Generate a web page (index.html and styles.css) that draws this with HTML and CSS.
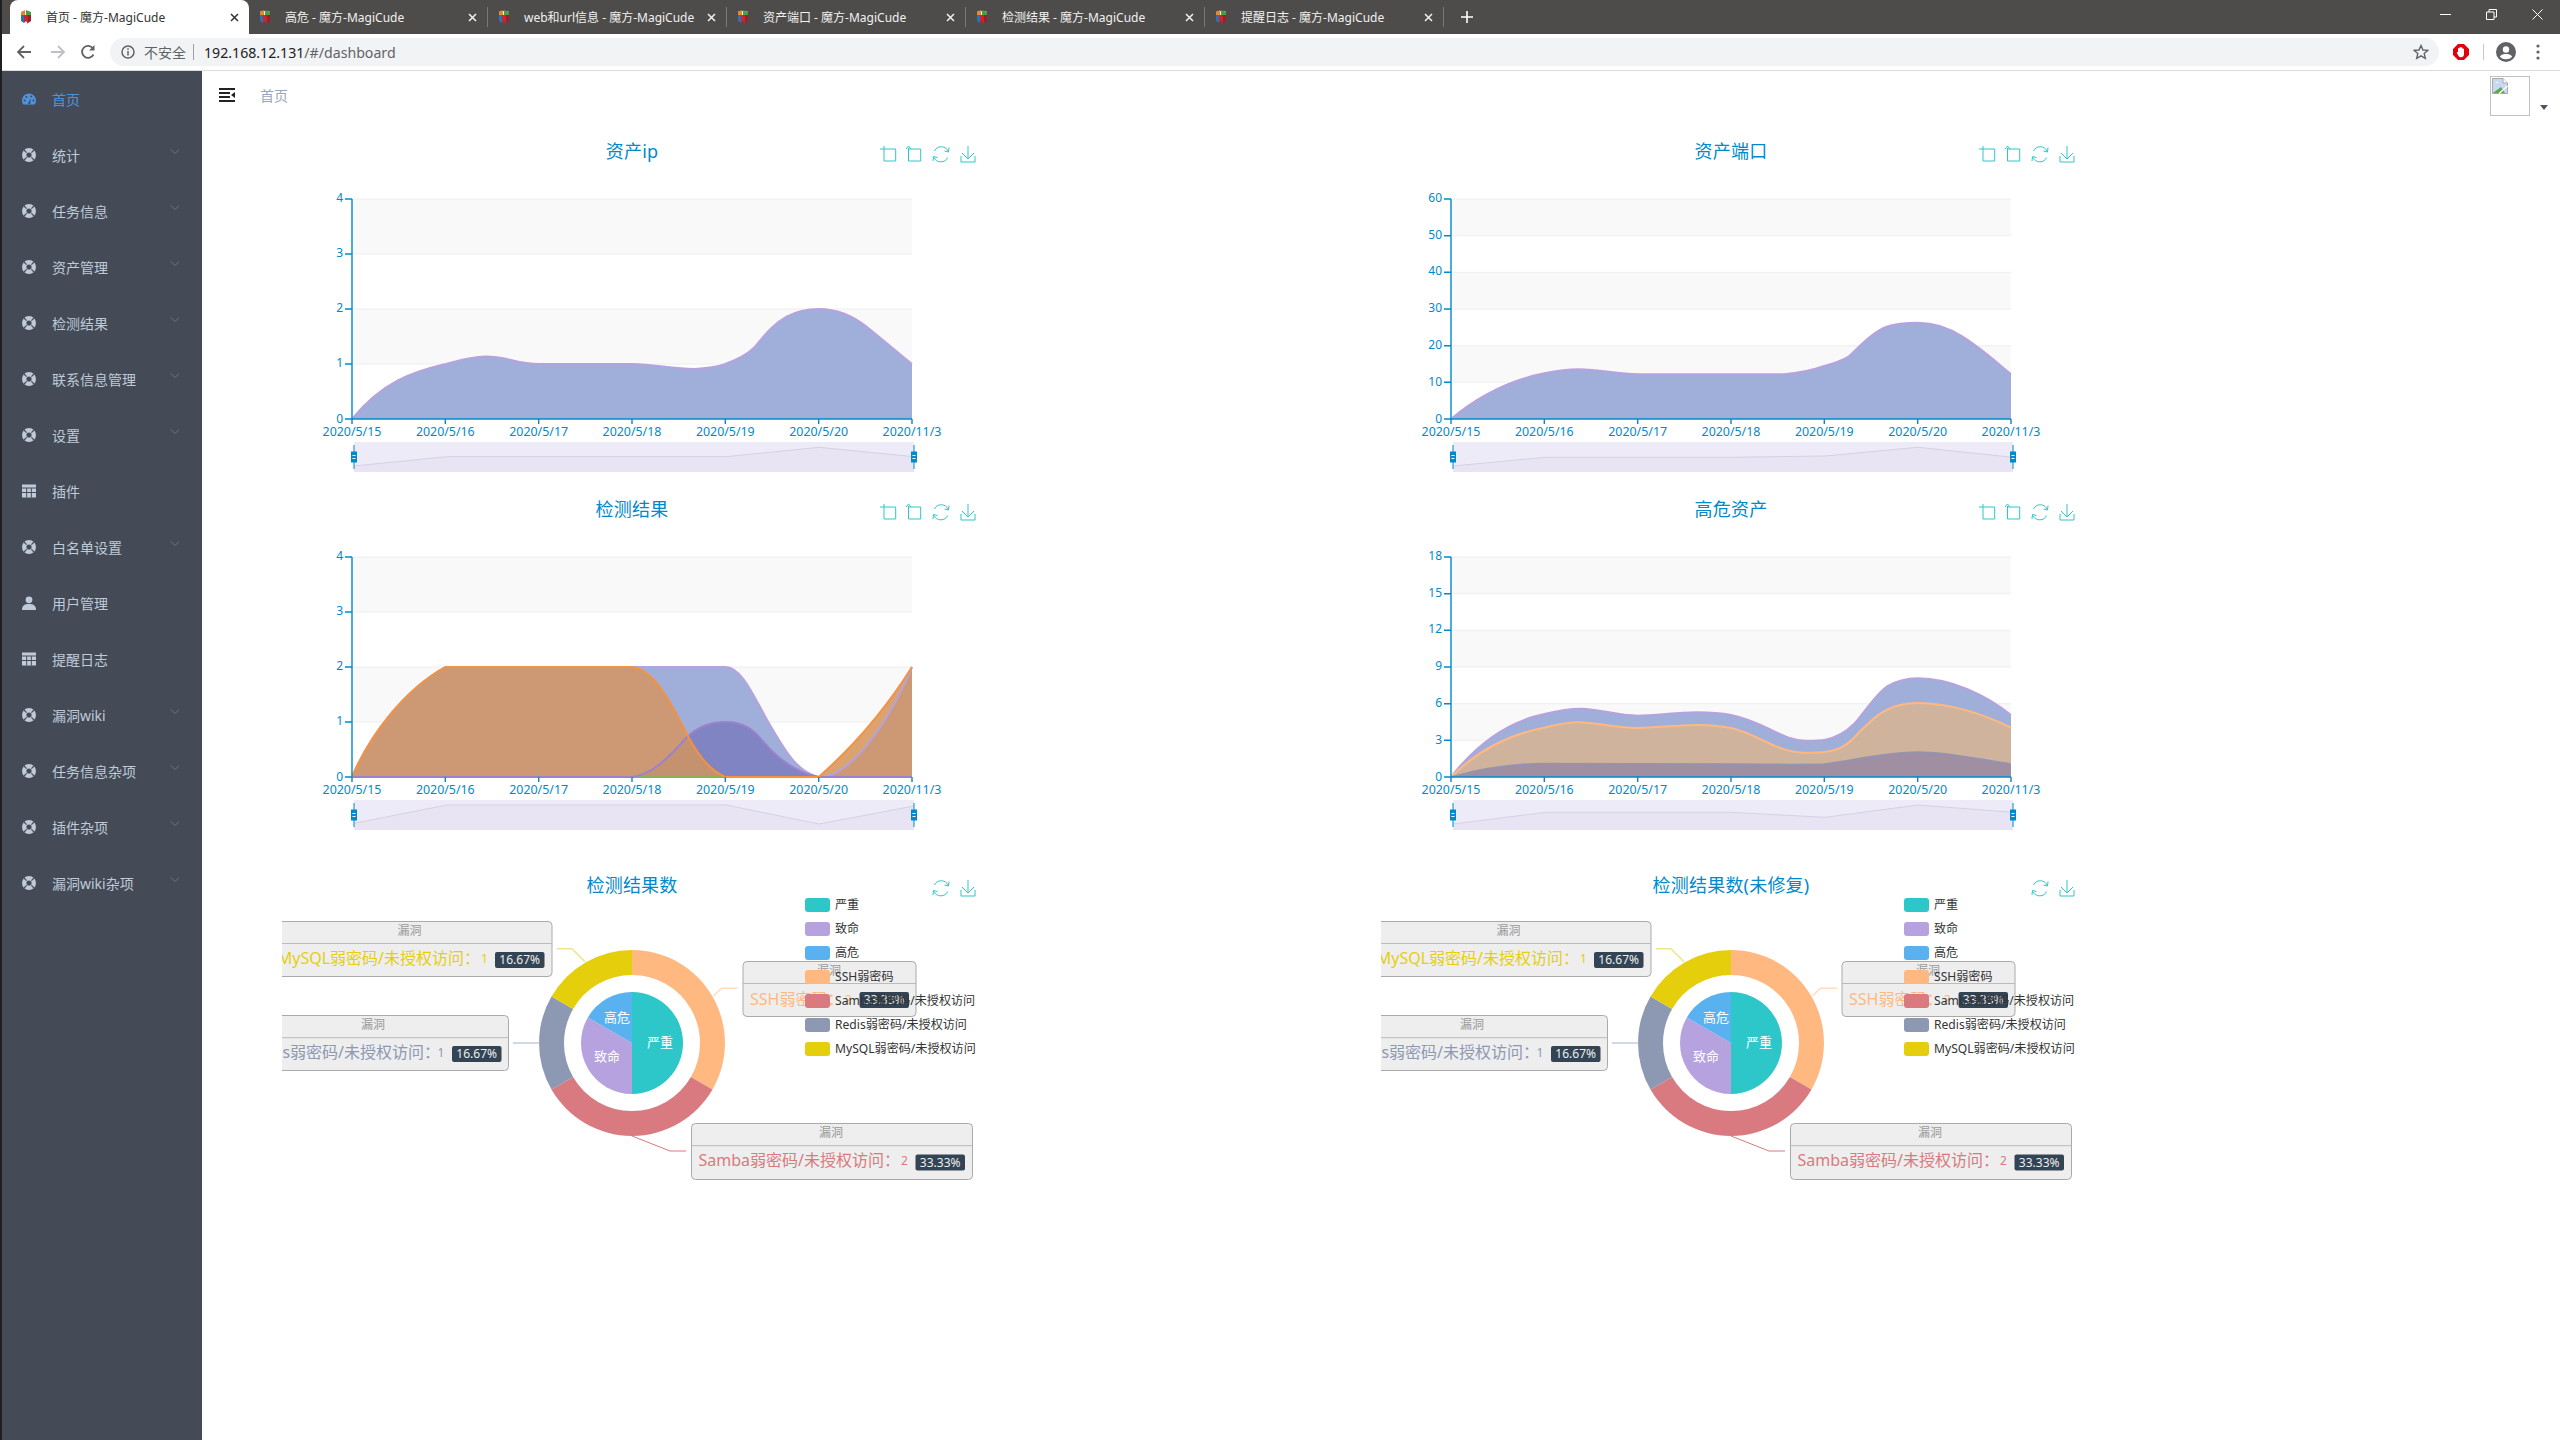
FILE: index.html
```html
<!DOCTYPE html>
<html lang="zh-CN">
<head>
<meta charset="utf-8">
<title>首页 - 魔方-MagiCude</title>
<link rel="stylesheet" href="styles.css">
</head>
<body>
<svg class="defs" width="0" height="0">
  <defs>
    <symbol id="fav" viewBox="0 0 10 14">
      <rect x="0" y="1" width="10" height="10" rx="2" fill="#eee"/>
      <path d="M0 2 L4 0 V5 L0 5 Z" fill="#e08a2c"/>
      <path d="M5 0 L10 2 V5 H5 Z" fill="#4c9a4a"/>
      <path d="M0 5 H3 V13 L0 11 Z" fill="#2f6fb5"/>
      <path d="M3 5 H7 V14 L5 11 L3 13 Z" fill="#c8262b"/>
      <path d="M7 5 H10 V11 L7 13 Z" fill="#9a1f2a"/>
    </symbol>
    <symbol id="x" viewBox="0 0 9 9"><path d="M1 1 L8 8 M8 1 L1 8" fill="none" stroke="currentColor" stroke-width="1.5"/></symbol>
    <symbol id="buoy" viewBox="0 0 14 14">
      <circle cx="7" cy="7" r="4.8" fill="none" stroke="#bfcbd9" stroke-width="4.4"/>
      <path d="M2 2 L4.6 4.6 M12 2 L9.4 4.6 M2 12 L4.6 9.4 M12 12 L9.4 9.4" stroke="#444a56" stroke-width="1.1"/>
    </symbol>
    <symbol id="table" viewBox="0 0 14 13">
      <rect width="14" height="13" fill="#bfcbd9"/>
      <path d="M0 3.5 H14 M0 8 H14 M4.7 3.5 V13 M9.3 3.5 V13" stroke="#444a56" stroke-width="1"/>
    </symbol>
    <symbol id="user" viewBox="0 0 14 14">
      <circle cx="7" cy="3.8" r="3.4" fill="#bfcbd9"/>
      <path d="M0 14 C0 9 3 8 7 8 C11 8 14 9 14 14 Z" fill="#bfcbd9"/>
    </symbol>
    <symbol id="chev" viewBox="0 0 10 6"><path d="M1 .5 L5 4.5 L9 .5" fill="none" stroke="#6f7682" stroke-width="1"/></symbol>
    <g id="t-zoom"><path d="M602 14 V29 H613.7 V17 H598" fill="none" stroke="#2ec7c9"/></g>
    <g id="t-back"><path d="M626.5 16 V29 H638.7 V17 H627 M624 17 L626.5 14 L629 17" fill="none" stroke="#2ec7c9"/></g>
    <g id="t-refresh"><path d="M652.5 19 A7.5 7.5 0 0 1 666 19 M665.6 25.5 A7.5 7.5 0 0 1 652 25.5 M667 15.5 L666.5 20 L662.5 19 M651 29 L651.5 24.5 L655.5 25.5" fill="none" stroke="#2ec7c9"/></g>
    <g id="t-save"><path d="M686 14 V27 M680 21 L686 27 L692 21 M679 24 V30 H693 V24" fill="none" stroke="#2ec7c9"/></g>
    <g id="handle">
      <path d="M0 -12 V12" stroke="#008acd"/>
      <rect x="-3" y="-5.5" width="6" height="11" fill="#008acd"/>
      <path d="M-1.5 -1.5 H1.5 M-1.5 1.5 H1.5" stroke="#fff"/>
    </g>
  </defs>
</svg>

<div class="window">
  <div class="tabstrip">
    <div class="tab tab-active"><svg class="fav"><use href="#fav"/></svg><span class="tab-title">首页 - 魔方-MagiCude</span><svg class="tab-x"><use href="#x"/></svg></div>
    <div class="tab"><svg class="fav"><use href="#fav"/></svg><span class="tab-title">高危 - 魔方-MagiCude</span><svg class="tab-x"><use href="#x"/></svg><i class="tab-sep"></i></div>
    <div class="tab"><svg class="fav"><use href="#fav"/></svg><span class="tab-title">web和url信息 - 魔方-MagiCude</span><svg class="tab-x"><use href="#x"/></svg><i class="tab-sep"></i></div>
    <div class="tab"><svg class="fav"><use href="#fav"/></svg><span class="tab-title">资产端口 - 魔方-MagiCude</span><svg class="tab-x"><use href="#x"/></svg><i class="tab-sep"></i></div>
    <div class="tab"><svg class="fav"><use href="#fav"/></svg><span class="tab-title">检测结果 - 魔方-MagiCude</span><svg class="tab-x"><use href="#x"/></svg><i class="tab-sep"></i></div>
    <div class="tab"><svg class="fav"><use href="#fav"/></svg><span class="tab-title">提醒日志 - 魔方-MagiCude</span><svg class="tab-x"><use href="#x"/></svg><i class="tab-sep"></i></div>
    <svg class="newtab" viewBox="0 0 14 14"><path d="M7 1 V13 M1 7 H13" stroke="#fff" stroke-width="1.6"/></svg>
    <div class="winctl">
      <svg class="wc wc-min" viewBox="0 0 11 11"><path d="M0 5.5 H11" stroke="#fff"/></svg>
      <svg class="wc" viewBox="0 0 11 11"><path d="M.5 3 H8 V10.5 H.5 Z M3 3 V.5 H10.5 V8 H8" fill="none" stroke="#fff"/></svg>
      <svg class="wc" viewBox="0 0 11 11"><path d="M.5 .5 L10.5 10.5 M10.5 .5 L.5 10.5" stroke="#fff"/></svg>
    </div>
  </div>

  <div class="toolbar">
    <svg class="nav" viewBox="0 0 16 16"><path d="M15 8 H2 M8 2 L2 8 L8 14" fill="none" stroke="#5f6368" stroke-width="1.8"/></svg>
    <svg class="nav nav-fwd" viewBox="0 0 16 16"><path d="M1 8 H14 M8 2 L14 8 L8 14" fill="none" stroke="#bdc1c6" stroke-width="1.8"/></svg>
    <svg class="nav nav-reload" viewBox="0 0 16 16"><path d="M13.5 10.5 A6 6 0 1 1 13 4.5" fill="none" stroke="#5f6368" stroke-width="1.8"/><path d="M14.5 1 V6.5 H9 Z" fill="#5f6368"/></svg>
    <div class="omnibox">
      <svg class="info" viewBox="0 0 14 14"><circle cx="7" cy="7" r="6" fill="none" stroke="#5f6368" stroke-width="1.5"/><path d="M7 6 V10.5 M7 3.3 V4.8" stroke="#5f6368" stroke-width="1.5"/></svg>
      <span class="insecure">不安全</span>
      <i class="omni-sep"></i>
      <span class="url"><b>192.168.12.131</b>/#/dashboard</span>
      <svg class="star" viewBox="0 0 16 16"><path d="M8 1.5 L10 6 L14.8 6.4 L11.2 9.6 L12.3 14.4 L8 11.9 L3.7 14.4 L4.8 9.6 L1.2 6.4 L6 6 Z" fill="none" stroke="#5f6368" stroke-width="1.4"/></svg>
    </div>
    <svg class="ext" viewBox="0 0 16 16"><path d="M5 0 H11 L16 5 V11 L11 16 H5 L0 11 V5 Z" fill="#e2000f"/><path d="M5 7 V4.5 a.8 .8 0 0 1 1.5 0 V3.5 a.8 .8 0 0 1 1.5 0 V3.8 a.8 .8 0 0 1 1.5 0 V5 a.8 .8 0 0 1 1.5 0 V10 a3.3 3.3 0 0 1 -3.3 3.2 C6 13.2 5.2 11.5 4 9.2 C3.5 8 4.6 7.6 5 8.3 Z" fill="#fff"/></svg>
    <i class="bar-sep"></i>
    <svg class="profile" viewBox="0 0 20 20"><circle cx="10" cy="10" r="10" fill="#5f6368"/><circle cx="10" cy="7.5" r="3.2" fill="#fff"/><path d="M3.8 14.8 C5 12.3 8 12 10 12 C12 12 15 12.3 16.2 14.8 C14.5 16.5 12.5 17.3 10 17.3 C7.5 17.3 5.5 16.5 3.8 14.8 Z" fill="#fff"/></svg>
    <svg class="kebab" viewBox="0 0 4 16"><circle cx="2" cy="2" r="1.6" fill="#5f6368"/><circle cx="2" cy="8" r="1.6" fill="#5f6368"/><circle cx="2" cy="14" r="1.6" fill="#5f6368"/></svg>
  </div>

  <div class="app">
    <aside class="sidebar">
      <a class="menu-item active"><svg class="mi" viewBox="0 0 14 14"><path d="M1.26 12.5 A7 7 0 1 1 12.74 12.5 Z" fill="#4f93e0"/><g fill="#444a56"><circle cx="2.6" cy="8.5" r="1"/><circle cx="4.4" cy="5" r="1"/><circle cx="9.2" cy="4.6" r="1"/><circle cx="11.4" cy="8.5" r="1"/><path d="M5.8 11.5 L8.8 6.5 L8.2 12 Z"/></g></svg><span>首页</span></a>
      <a class="menu-item"><svg class="mi"><use href="#buoy"/></svg><span>统计</span><svg class="chev"><use href="#chev"/></svg></a>
      <a class="menu-item"><svg class="mi"><use href="#buoy"/></svg><span>任务信息</span><svg class="chev"><use href="#chev"/></svg></a>
      <a class="menu-item"><svg class="mi"><use href="#buoy"/></svg><span>资产管理</span><svg class="chev"><use href="#chev"/></svg></a>
      <a class="menu-item"><svg class="mi"><use href="#buoy"/></svg><span>检测结果</span><svg class="chev"><use href="#chev"/></svg></a>
      <a class="menu-item"><svg class="mi"><use href="#buoy"/></svg><span>联系信息管理</span><svg class="chev"><use href="#chev"/></svg></a>
      <a class="menu-item"><svg class="mi"><use href="#buoy"/></svg><span>设置</span><svg class="chev"><use href="#chev"/></svg></a>
      <a class="menu-item"><svg class="mi"><use href="#table"/></svg><span>插件</span></a>
      <a class="menu-item"><svg class="mi"><use href="#buoy"/></svg><span>白名单设置</span><svg class="chev"><use href="#chev"/></svg></a>
      <a class="menu-item"><svg class="mi"><use href="#user"/></svg><span>用户管理</span></a>
      <a class="menu-item"><svg class="mi"><use href="#table"/></svg><span>提醒日志</span></a>
      <a class="menu-item"><svg class="mi"><use href="#buoy"/></svg><span>漏洞wiki</span><svg class="chev"><use href="#chev"/></svg></a>
      <a class="menu-item"><svg class="mi"><use href="#buoy"/></svg><span>任务信息杂项</span><svg class="chev"><use href="#chev"/></svg></a>
      <a class="menu-item"><svg class="mi"><use href="#buoy"/></svg><span>插件杂项</span><svg class="chev"><use href="#chev"/></svg></a>
      <a class="menu-item"><svg class="mi"><use href="#buoy"/></svg><span>漏洞wiki杂项</span><svg class="chev"><use href="#chev"/></svg></a>
    </aside>

    <main class="main">
      <header class="navbar">
        <svg class="hamburger" viewBox="0 0 16 14"><path d="M0 1 H16 M0 5 H11 M0 9 H11 M0 13 H16" stroke="#222" stroke-width="2"/><path d="M16 4 V10 L12 7 Z" fill="#222"/></svg>
        <span class="crumb">首页</span>
        <div class="avatar"><svg class="broken" viewBox="0 0 16 16"><path d="M.5 .5 H11 L15.5 5 V15.5 H.5 Z" fill="#c8d8f4" stroke="#a9a9a9"/><path d="M1 15 L9 9 L13 15 Z" fill="#5aa848"/><path d="M11 .5 V5 H15.5" fill="#fff" stroke="#a9a9a9"/><path d="M3 5 Q5 3 7 5 Z" fill="#fff"/><path d="M7 15.5 L15.5 8" stroke="#fff" stroke-width="1.4"/></svg></div>
        <i class="caret"></i>
      </header>

      <section class="charts">

        <!-- 资产ip -->
        <div class="chart chart-a">
          <svg class="chart-svg" viewBox="0 0 700 358">
            <text class="c-title" x="350" y="26">资产ip</text>
            <use href="#t-zoom"/><use href="#t-back"/><use href="#t-refresh"/><use href="#t-save"/>
            <rect class="band" x="70" y="67" width="560" height="55"/><rect class="band" x="70" y="177" width="560" height="55"/>
            <path class="gridline" d="M70 67 H630 M70 122 H630 M70 177 H630 M70 232 H630"/>
            <path class="area-blue" d="M70,287 C100,250 130,240 163.3,232 C178,228 190,224.5 204,224.5 C225,224.5 235,232 256.7,232 L350,232 C372,232 390,237 412,237 C425,236.5 435,235 443.3,232 C458,226 466,222 473,214.7 C485,200 493,191 504.6,184.7 C515,179 525,177 536.7,177 C555,177 570,183 585,195 C600,207 615,220 630,232 L630,287 Z"/>
            <path class="line-blue" d="M70,287 C100,250 130,240 163.3,232 C178,228 190,224.5 204,224.5 C225,224.5 235,232 256.7,232 L350,232 C372,232 390,237 412,237 C425,236.5 435,235 443.3,232 C458,226 466,222 473,214.7 C485,200 493,191 504.6,184.7 C515,179 525,177 536.7,177 C555,177 570,183 585,195 C600,207 615,220 630,232"/>
            <path class="axis" d="M70 67 V287 M63 67 H70 M63 122 H70 M63 177 H70 M63 232 H70 M63 287 H630 M70 287 V292 M163.3 287 V292 M256.7 287 V292 M350 287 V292 M443.3 287 V292 M536.7 287 V292 M630 287 V292"/>
            <text class="ylab" x="61" y="70">4</text><text class="ylab" x="61" y="125">3</text><text class="ylab" x="61" y="180">2</text><text class="ylab" x="61" y="235">1</text><text class="ylab" x="61" y="291">0</text>
            <text class="xlab" x="70" y="304">2020/5/15</text><text class="xlab" x="163.3" y="304">2020/5/16</text><text class="xlab" x="256.7" y="304">2020/5/17</text><text class="xlab" x="350" y="304">2020/5/18</text><text class="xlab" x="443.3" y="304">2020/5/19</text><text class="xlab" x="536.7" y="304">2020/5/20</text><text class="xlab" x="630" y="304">2020/11/3</text>
            <rect class="dz" x="72" y="310" width="560" height="30"/>
            <path class="dz-under" d="M72 334 L165 324.7 L444 324.7 L537 315.3 L632 324.7 V340 H72 Z"/>
            <path class="dz-line" d="M72 334 L165 324.7 L444 324.7 L537 315.3 L632 324.7"/>
            <use href="#handle" x="72" y="325"/><use href="#handle" x="632" y="325"/>
          </svg>
        </div>

        <!-- 资产端口 -->
        <div class="chart chart-a">
          <svg class="chart-svg" viewBox="0 0 700 358">
            <text class="c-title" x="350" y="26">资产端口</text>
            <use href="#t-zoom"/><use href="#t-back"/><use href="#t-refresh"/><use href="#t-save"/>
            <rect class="band" x="70" y="67" width="560" height="36.7"/><rect class="band" x="70" y="140.3" width="560" height="36.7"/><rect class="band" x="70" y="213.7" width="560" height="36.6"/>
            <path class="gridline" d="M70 67 H630 M70 103.7 H630 M70 140.3 H630 M70 177 H630 M70 213.7 H630 M70 250.3 H630"/>
            <path class="area-blue" d="M70,287 C100,262 130,248 163.3,241.3 C175,239 187,237.3 197.6,237.3 C220,237.3 235,242.3 256.7,242.3 L403,242.3 C420,241 432,238 443.3,234 C455,231 462,228 467.6,224.7 C480,213 492,200 505.6,194.7 C515,191.5 525,190.7 536.7,190.7 C555,190.7 570,197 581.5,204.7 C600,216 615,230 630,242.3 L630,287 Z"/>
            <path class="line-blue" d="M70,287 C100,262 130,248 163.3,241.3 C175,239 187,237.3 197.6,237.3 C220,237.3 235,242.3 256.7,242.3 L403,242.3 C420,241 432,238 443.3,234 C455,231 462,228 467.6,224.7 C480,213 492,200 505.6,194.7 C515,191.5 525,190.7 536.7,190.7 C555,190.7 570,197 581.5,204.7 C600,216 615,230 630,242.3"/>
            <path class="axis" d="M70 67 V287 M63 67 H70 M63 103.7 H70 M63 140.3 H70 M63 177 H70 M63 213.7 H70 M63 250.3 H70 M63 287 H630 M70 287 V292 M163.3 287 V292 M256.7 287 V292 M350 287 V292 M443.3 287 V292 M536.7 287 V292 M630 287 V292"/>
            <text class="ylab" x="61" y="70">60</text><text class="ylab" x="61" y="107">50</text><text class="ylab" x="61" y="143">40</text><text class="ylab" x="61" y="180">30</text><text class="ylab" x="61" y="217">20</text><text class="ylab" x="61" y="254">10</text><text class="ylab" x="61" y="291">0</text>
            <text class="xlab" x="70" y="304">2020/5/15</text><text class="xlab" x="163.3" y="304">2020/5/16</text><text class="xlab" x="256.7" y="304">2020/5/17</text><text class="xlab" x="350" y="304">2020/5/18</text><text class="xlab" x="443.3" y="304">2020/5/19</text><text class="xlab" x="536.7" y="304">2020/5/20</text><text class="xlab" x="630" y="304">2020/11/3</text>
            <rect class="dz" x="72" y="310" width="560" height="30"/>
            <path class="dz-under" d="M72 334 L165 325.3 L350 325.3 L444 324 L537 315.3 L632 325.3 V340 H72 Z"/>
            <path class="dz-line" d="M72 334 L165 325.3 L350 325.3 L444 324 L537 315.3 L632 325.3"/>
            <use href="#handle" x="72" y="325"/><use href="#handle" x="632" y="325"/>
          </svg>
        </div>

        <!-- 检测结果 -->
        <div class="chart chart-b">
          <svg class="chart-svg" viewBox="0 0 700 376">
            <text class="c-title" x="350" y="26">检测结果</text>
            <use href="#t-zoom"/><use href="#t-back"/><use href="#t-refresh"/><use href="#t-save"/>
            <rect class="band" x="70" y="67" width="560" height="55"/><rect class="band" x="70" y="177" width="560" height="55"/>
            <path class="gridline" d="M70 67 H630 M70 122 H630 M70 177 H630 M70 232 H630"/>
            <path class="area-blue" d="M70,287 C88,245 122,200 163.3,177 L443.3,177 C462,177 475,215 491,240 C503,260 515,282 536.7,287 C567,287 603,240 630,177 L630,287 Z"/>
            <path class="line-blue" d="M70,287 C88,245 122,200 163.3,177 L443.3,177 C462,177 475,215 491,240 C503,260 515,282 536.7,287"/>
            <path class="area-purple" d="M350,287 C368,285 385,270 404,248 C415,237 428,232 443.3,232 C462,232 472,240 480,250 C495,268 515,283 536.7,287 Z"/>
            <path class="area-orange" d="M70,287 C88,245 122,200 163.3,177 L350,177 C375,180 392,220 406.4,247 C418,268 428,280 443.3,287 L536.7,287 C565,262 600,225 630,177 L630,287 Z"/>
            <path class="area-overlap" d="M350,287 C368,285 385,270 404,248 L406.4,247 C418,268 428,280 443.3,287 Z"/>
            <path class="area-orange-only" d="M536.7,287 C565,262 600,225 630,177 C603,240 567,287 536.7,287 Z"/>
            <path class="line-blue" d="M536.7,287 C567,287 603,240 630,177"/>
            <path class="line-green" d="M350 287 H443.3"/>
            <path class="line-purple" d="M70 287 H350 C368,285 385,270 404,248 M404,248 C415,237 428,232 443.3,232 C462,232 472,240 480,250 C495,268 515,283 536.7,287 H630"/>
            <path class="line-orange" d="M70,287 C88,245 122,200 163.3,177 L350,177 C375,180 392,220 406.4,247 C418,268 428,280 443.3,287 L536.7,287 C565,262 600,225 630,177"/>
            <path class="axis" d="M70 67 V287 M63 67 H70 M63 122 H70 M63 177 H70 M63 232 H70 M63 287 H70 M70 287 V292 M163.3 287 V292 M256.7 287 V292 M350 287 V292 M443.3 287 V292 M536.7 287 V292 M630 287 V292"/>
            <text class="ylab" x="61" y="70">4</text><text class="ylab" x="61" y="125">3</text><text class="ylab" x="61" y="180">2</text><text class="ylab" x="61" y="235">1</text><text class="ylab" x="61" y="291">0</text>
            <text class="xlab" x="70" y="304">2020/5/15</text><text class="xlab" x="163.3" y="304">2020/5/16</text><text class="xlab" x="256.7" y="304">2020/5/17</text><text class="xlab" x="350" y="304">2020/5/18</text><text class="xlab" x="443.3" y="304">2020/5/19</text><text class="xlab" x="536.7" y="304">2020/5/20</text><text class="xlab" x="630" y="304">2020/11/3</text>
            <rect class="dz" x="72" y="310" width="560" height="30"/>
            <path class="dz-under" d="M72 333.3 L165 315 L444 315 L537 334 L632 316 V340 H72 Z"/>
            <path class="dz-line" d="M72 333.3 L165 315 L444 315 L537 334 L632 316"/>
            <use href="#handle" x="72" y="325"/><use href="#handle" x="632" y="325"/>
          </svg>
        </div>

        <!-- 高危资产 -->
        <div class="chart chart-b">
          <svg class="chart-svg" viewBox="0 0 700 376">
            <text class="c-title" x="350" y="26">高危资产</text>
            <use href="#t-zoom"/><use href="#t-back"/><use href="#t-refresh"/><use href="#t-save"/>
            <rect class="band" x="70" y="67" width="560" height="36.7"/><rect class="band" x="70" y="140.3" width="560" height="36.7"/><rect class="band" x="70" y="213.7" width="560" height="36.6"/>
            <path class="gridline" d="M70 67 H630 M70 103.7 H630 M70 140.3 H630 M70 177 H630 M70 213.7 H630 M70 250.3 H630"/>
            <path class="area-blue" d="M70,287 C95,255 125,232 163.3,224 C180,220 190,218.7 200,218.7 C220,219 235,225.7 256.7,225.7 C275,225.7 295,222.3 316,222.3 C330,222.3 340,223 350,225 C385,232 400,250.7 425,250.7 C435,250.7 440,250.5 443.3,250 C455,248 465,242 474,233 C485,220 495,204 505.6,196.7 C515,191 525,188.3 536.7,188.3 C570,188.3 605,205 630,225 L630,287 Z"/>
            <path class="line-blue" d="M70,287 C95,255 125,232 163.3,224 C180,220 190,218.7 200,218.7 C220,219 235,225.7 256.7,225.7 C275,225.7 295,222.3 316,222.3 C330,222.3 340,223 350,225 C385,232 400,250.7 425,250.7 C435,250.7 440,250.5 443.3,250 C455,248 465,242 474,233 C485,220 495,204 505.6,196.7 C515,191 525,188.3 536.7,188.3 C570,188.3 605,205 630,225"/>
            <path class="area-tan" d="M70,287 C95,262 125,245 163.3,237.7 C175,235 185,232.3 197,232.3 C215,232.3 235,238 256.7,238 C275,238 295,235 316,235 C330,235 340,236 350,238 C380,245 395,262.7 425,262.7 C432,262.7 438,262.5 443.3,262 C458,260 465,256 474,246.7 C485,235 495,225 505.6,220 C515,215 525,213 536.7,213 C570,213 605,225 630,237.7 L630,287 Z"/>
            <path class="line-tan" d="M70,287 C95,262 125,245 163.3,237.7 C175,235 185,232.3 197,232.3 C215,232.3 235,238 256.7,238 C275,238 295,235 316,235 C330,235 340,236 350,238 C380,245 395,262.7 425,262.7 C432,262.7 438,262.5 443.3,262 C458,260 465,256 474,246.7 C485,235 495,225 505.6,220 C515,215 525,213 536.7,213 C570,213 605,225 630,237.7"/>
            <path class="area-mauve" d="M70,287 C95,280 130,273.5 163.3,273.5 L350,274 C380,274 410,275 443.3,274 C475,270 505,262 536.7,262 C570,262 600,270 630,274 L630,287 Z"/>
            <path class="line-mauve" d="M70,287 C95,280 130,273.5 163.3,273.5 L350,274 C380,274 410,275 443.3,274 C475,270 505,262 536.7,262 C570,262 600,270 630,274"/>
            <path class="axis" d="M70 67 V287 M63 67 H70 M63 103.7 H70 M63 140.3 H70 M63 177 H70 M63 213.7 H70 M63 250.3 H70 M63 287 H630 M70 287 V292 M163.3 287 V292 M256.7 287 V292 M350 287 V292 M443.3 287 V292 M536.7 287 V292 M630 287 V292"/>
            <text class="ylab" x="61" y="70">18</text><text class="ylab" x="61" y="107">15</text><text class="ylab" x="61" y="143">12</text><text class="ylab" x="61" y="180">9</text><text class="ylab" x="61" y="217">6</text><text class="ylab" x="61" y="254">3</text><text class="ylab" x="61" y="291">0</text>
            <text class="xlab" x="70" y="304">2020/5/15</text><text class="xlab" x="163.3" y="304">2020/5/16</text><text class="xlab" x="256.7" y="304">2020/5/17</text><text class="xlab" x="350" y="304">2020/5/18</text><text class="xlab" x="443.3" y="304">2020/5/19</text><text class="xlab" x="536.7" y="304">2020/5/20</text><text class="xlab" x="630" y="304">2020/11/3</text>
            <rect class="dz" x="72" y="310" width="560" height="30"/>
            <path class="dz-under" d="M72 334 L165 322.3 L350 322.3 L444 327.3 L537 315 L632 322.3 V340 H72 Z"/>
            <path class="dz-line" d="M72 334 L165 322.3 L350 322.3 L444 327.3 L537 315 L632 322.3"/>
            <use href="#handle" x="72" y="325"/><use href="#handle" x="632" y="325"/>
          </svg>
        </div>

        <!-- 检测结果数 -->
        <div class="chart chart-c">
          <svg class="chart-svg" viewBox="0 0 700 340">
            <text class="c-title" x="350" y="26">检测结果数</text>
            <use href="#t-refresh"/><use href="#t-save"/>
            <path class="seg" fill="#ffb980" d="M350 84 A93 93 0 0 1 430.5 223.5 L408.9 211 A68 68 0 0 0 350 109 Z"/>
            <path class="seg" fill="#d87a80" d="M430.5 223.5 A93 93 0 0 1 269.5 223.5 L291.1 211 A68 68 0 0 0 408.9 211 Z"/>
            <path class="seg" fill="#8d98b3" d="M269.5 223.5 A93 93 0 0 1 269.5 130.5 L291.1 143 A68 68 0 0 0 291.1 211 Z"/>
            <path class="seg" fill="#e5cf0d" d="M269.5 130.5 A93 93 0 0 1 350 84 L350 109 A68 68 0 0 0 291.1 143 Z"/>
            <path class="seg" fill="#2ec7c9" d="M350 126 A51 51 0 0 1 350 228 Z"/>
            <path class="seg" fill="#b6a2de" d="M350 228 A51 51 0 0 1 305.83 151.5 L350 177 Z"/>
            <path class="seg" fill="#5ab1ef" d="M305.83 151.5 A51 51 0 0 1 350 126 L350 177 Z"/>
            <text class="pie-lab" x="378" y="181">严重</text><text class="pie-lab" x="335" y="156">高危</text><text class="pie-lab" x="325" y="195">致命</text>
            <path class="lead lead-y" d="M275 82.7 H290 L303 95.7"/>
            <path class="lead lead-o" d="M431.4 129.7 L439.7 122.3 H455.8"/>
            <path class="lead lead-g" d="M231 177 H257.4"/>
            <path class="lead lead-r" d="M350 270 L388 285 H404"/>

            <rect class="lb" x="-15" y="55.5" width="285" height="55" rx="4"/><path class="lb-hr" d="M-15 77.5 H270"/>
            <text class="lb-h" x="127.5" y="69">漏洞</text>
            <text class="lb-t tc-y" x="198" y="98">MySQL弱密码/未授权访问：</text><text class="lb-n tc-y" x="199" y="97">1</text>
            <rect class="pc" x="213" y="86" width="49.5" height="16" rx="2"/><text class="pc-t" x="237.7" y="98">16.67%</text>

            <rect class="lb" x="-44" y="149.5" width="270.5" height="55" rx="4"/><path class="lb-hr" d="M-44 171.7 H226.5"/>
            <text class="lb-h" x="91" y="163">漏洞</text>
            <text class="lb-t tc-g" x="158" y="192">Redis弱密码/未授权访问：</text><text class="lb-n tc-g" x="155.5" y="191">1</text>
            <rect class="pc" x="170" y="180" width="49.5" height="16" rx="2"/><text class="pc-t" x="194.7" y="192">16.67%</text>

            <rect class="lb" x="409.5" y="257.5" width="281" height="56" rx="4"/><path class="lb-hr" d="M409.5 279.7 H690.5"/>
            <text class="lb-h" x="549" y="271">漏洞</text>
            <text class="lb-t tc-r" x="618" y="300">Samba弱密码/未授权访问：</text><text class="lb-n tc-r" x="619" y="299">2</text>
            <rect class="pc" x="633.5" y="288.5" width="49.5" height="16" rx="2"/><text class="pc-t" x="658.2" y="300.5">33.33%</text>

            <rect class="lb" x="461" y="95.5" width="173" height="55" rx="4"/><path class="lb-hr" d="M461 117.5 H634"/>
            <text class="lb-h" x="547" y="109">漏洞</text>
            <text class="lb-s tc-o" x="468" y="139">SSH弱密码：</text><text class="lb-n tc-o" x="563" y="138">2</text>
            <rect class="pc" x="577.5" y="126" width="49.5" height="16" rx="2"/><text class="pc-t" x="602.2" y="138">33.33%</text>

            <rect class="lg" fill="#2ec7c9" x="523" y="32" width="25" height="14" rx="3"/><text class="lg-t" x="553" y="43">严重</text>
            <rect class="lg" fill="#b6a2de" x="523" y="56" width="25" height="14" rx="3"/><text class="lg-t" x="553" y="67">致命</text>
            <rect class="lg" fill="#5ab1ef" x="523" y="80" width="25" height="14" rx="3"/><text class="lg-t" x="553" y="91">高危</text>
            <rect class="lg" fill="#ffb980" x="523" y="104" width="25" height="14" rx="3"/><text class="lg-t" x="553" y="115">SSH弱密码</text>
            <rect class="lg" fill="#d87a80" x="523" y="128" width="25" height="14" rx="3"/><text class="lg-t" x="553" y="139">Samba弱密码/未授权访问</text>
            <rect class="lg" fill="#8d98b3" x="523" y="152" width="25" height="14" rx="3"/><text class="lg-t" x="553" y="163">Redis弱密码/未授权访问</text>
            <rect class="lg" fill="#e5cf0d" x="523" y="176" width="25" height="14" rx="3"/><text class="lg-t" x="553" y="187">MySQL弱密码/未授权访问</text>
          </svg>
        </div>

        <!-- 检测结果数(未修复) -->
        <div class="chart chart-c">
          <svg class="chart-svg" viewBox="0 0 700 340">
            <text class="c-title" x="350" y="26">检测结果数(未修复)</text>
            <use href="#t-refresh"/><use href="#t-save"/>
            <path class="seg" fill="#ffb980" d="M350 84 A93 93 0 0 1 430.5 223.5 L408.9 211 A68 68 0 0 0 350 109 Z"/>
            <path class="seg" fill="#d87a80" d="M430.5 223.5 A93 93 0 0 1 269.5 223.5 L291.1 211 A68 68 0 0 0 408.9 211 Z"/>
            <path class="seg" fill="#8d98b3" d="M269.5 223.5 A93 93 0 0 1 269.5 130.5 L291.1 143 A68 68 0 0 0 291.1 211 Z"/>
            <path class="seg" fill="#e5cf0d" d="M269.5 130.5 A93 93 0 0 1 350 84 L350 109 A68 68 0 0 0 291.1 143 Z"/>
            <path class="seg" fill="#2ec7c9" d="M350 126 A51 51 0 0 1 350 228 Z"/>
            <path class="seg" fill="#b6a2de" d="M350 228 A51 51 0 0 1 305.83 151.5 L350 177 Z"/>
            <path class="seg" fill="#5ab1ef" d="M305.83 151.5 A51 51 0 0 1 350 126 L350 177 Z"/>
            <text class="pie-lab" x="378" y="181">严重</text><text class="pie-lab" x="335" y="156">高危</text><text class="pie-lab" x="325" y="195">致命</text>
            <path class="lead lead-y" d="M275 82.7 H290 L303 95.7"/>
            <path class="lead lead-o" d="M431.4 129.7 L439.7 122.3 H455.8"/>
            <path class="lead lead-g" d="M231 177 H257.4"/>
            <path class="lead lead-r" d="M350 270 L388 285 H404"/>

            <rect class="lb" x="-15" y="55.5" width="285" height="55" rx="4"/><path class="lb-hr" d="M-15 77.5 H270"/>
            <text class="lb-h" x="127.5" y="69">漏洞</text>
            <text class="lb-t tc-y" x="198" y="98">MySQL弱密码/未授权访问：</text><text class="lb-n tc-y" x="199" y="97">1</text>
            <rect class="pc" x="213" y="86" width="49.5" height="16" rx="2"/><text class="pc-t" x="237.7" y="98">16.67%</text>

            <rect class="lb" x="-44" y="149.5" width="270.5" height="55" rx="4"/><path class="lb-hr" d="M-44 171.7 H226.5"/>
            <text class="lb-h" x="91" y="163">漏洞</text>
            <text class="lb-t tc-g" x="158" y="192">Redis弱密码/未授权访问：</text><text class="lb-n tc-g" x="155.5" y="191">1</text>
            <rect class="pc" x="170" y="180" width="49.5" height="16" rx="2"/><text class="pc-t" x="194.7" y="192">16.67%</text>

            <rect class="lb" x="409.5" y="257.5" width="281" height="56" rx="4"/><path class="lb-hr" d="M409.5 279.7 H690.5"/>
            <text class="lb-h" x="549" y="271">漏洞</text>
            <text class="lb-t tc-r" x="618" y="300">Samba弱密码/未授权访问：</text><text class="lb-n tc-r" x="619" y="299">2</text>
            <rect class="pc" x="633.5" y="288.5" width="49.5" height="16" rx="2"/><text class="pc-t" x="658.2" y="300.5">33.33%</text>

            <rect class="lb" x="461" y="95.5" width="173" height="55" rx="4"/><path class="lb-hr" d="M461 117.5 H634"/>
            <text class="lb-h" x="547" y="109">漏洞</text>
            <text class="lb-s tc-o" x="468" y="139">SSH弱密码：</text><text class="lb-n tc-o" x="563" y="138">2</text>
            <rect class="pc" x="577.5" y="126" width="49.5" height="16" rx="2"/><text class="pc-t" x="602.2" y="138">33.33%</text>

            <rect class="lg" fill="#2ec7c9" x="523" y="32" width="25" height="14" rx="3"/><text class="lg-t" x="553" y="43">严重</text>
            <rect class="lg" fill="#b6a2de" x="523" y="56" width="25" height="14" rx="3"/><text class="lg-t" x="553" y="67">致命</text>
            <rect class="lg" fill="#5ab1ef" x="523" y="80" width="25" height="14" rx="3"/><text class="lg-t" x="553" y="91">高危</text>
            <rect class="lg" fill="#ffb980" x="523" y="104" width="25" height="14" rx="3"/><text class="lg-t" x="553" y="115">SSH弱密码</text>
            <rect class="lg" fill="#d87a80" x="523" y="128" width="25" height="14" rx="3"/><text class="lg-t" x="553" y="139">Samba弱密码/未授权访问</text>
            <rect class="lg" fill="#8d98b3" x="523" y="152" width="25" height="14" rx="3"/><text class="lg-t" x="553" y="163">Redis弱密码/未授权访问</text>
            <rect class="lg" fill="#e5cf0d" x="523" y="176" width="25" height="14" rx="3"/><text class="lg-t" x="553" y="187">MySQL弱密码/未授权访问</text>
          </svg>
        </div>

      </section>
    </main>
  </div>
</div>
</body>
</html>
```

FILE: styles.css
```css
* { box-sizing: border-box; }
html, body { margin: 0; height: 100%; }
body {
  background: #1f1f1f;
  padding-left: 2px;
  overflow: hidden;
  font-family: "Noto Sans", "Noto Sans CJK SC", sans-serif;
}
.defs { display: block; height: 0; width: 0; }
.window { height: 1440px; display: flex; flex-direction: column; background: #fff; }

/* browser chrome */
.tabstrip { height: 34px; flex: none; background: #4e4c4a; display: flex; align-items: stretch; padding-left: 8px; }
.tab { width: 239px; display: flex; align-items: center; padding-left: 11px; color: #f1f1f1; font-size: 12px; }
.tab-active { background: #fff; color: #333; border-radius: 8px 8px 0 0; margin-top: 0; }
.fav { width: 10px; height: 14px; margin-right: 15px; flex: none; }
.tab-title { flex: 1; white-space: nowrap; overflow: hidden; }
.tab-x { width: 9px; height: 9px; margin-right: 10px; flex: none; }
.tab-active .tab-x { margin-right: 10px; }
.tab-sep { width: 1px; height: 20px; background: #7b7977; flex: none; }
.newtab { width: 14px; height: 14px; align-self: center; margin-left: 16px; }
.winctl { margin-left: auto; display: flex; align-items: center; gap: 35px; padding-right: 17px; padding-bottom: 6px; }
.wc { width: 11px; height: 11px; display: block; }

.toolbar { height: 37px; flex: none; background: #fff; border-bottom: 1px solid #dadce0; display: flex; align-items: center; padding: 0 20px 0 14px; }
.nav { width: 16px; height: 16px; flex: none; }
.nav-fwd { margin-left: 18px; }
.nav-reload { margin-left: 14px; }
.omnibox { flex: 1; height: 28px; margin-left: 14px; background: #f1f3f4; border-radius: 14px; display: flex; align-items: center; padding: 0 10px 0 11px; }
.info { width: 14px; height: 14px; flex: none; }
.insecure { margin-left: 9px; font-size: 14px; color: #5f6368; }
.omni-sep { width: 1px; height: 16px; background: #9aa0a6; margin-left: 7px; }
.url { margin-left: 10px; font-size: 14.15px; color: #5f6368; white-space: nowrap; }
.url b { font-weight: 400; color: #202124; }
.star { width: 16px; height: 16px; margin-left: auto; }
.ext { width: 16px; height: 16px; margin-left: 14px; flex: none; }
.bar-sep { width: 1px; height: 16px; background: #c4c7ca; margin-left: 14px; flex: none; }
.profile { width: 20px; height: 20px; margin-left: 12px; flex: none; }
.kebab { width: 4px; height: 16px; margin-left: 20px; flex: none; }

/* app shell */
.app { flex: 1; display: flex; min-height: 0; }
.sidebar { width: 200px; flex: none; background: #444a56; }
.menu-item { height: 56px; display: flex; align-items: center; padding: 0 22px 0 20px; color: #bfcbd9; font-size: 14px; white-space: nowrap; }
.menu-item.active { color: #4f93e0; }
.mi { width: 14px; height: 14px; flex: none; margin-right: 16px; }
.chev { width: 10px; height: 6px; margin-left: auto; margin-bottom: 6px; }

.main { flex: 1; min-width: 0; }
.navbar { height: 48px; display: flex; align-items: center; padding: 0 12px 0 17px; }
.hamburger { width: 16px; height: 14px; }
.crumb { margin-left: 25px; font-size: 14px; color: #97a8be; }
.avatar { width: 40px; height: 40px; margin-left: auto; align-self: flex-start; margin-top: 5px; border: 1px solid #c0c0c0; padding: 1px; }
.broken { width: 16px; height: 16px; display: block; }
.caret { width: 0; height: 0; margin-left: 10px; align-self: flex-start; margin-top: 34px; border-left: 4px solid transparent; border-right: 4px solid transparent; border-top: 5px solid #4a5568; }

/* charts */
.charts { display: grid; grid-template-columns: 700px 700px; column-gap: 399px; padding: 13px 0 0 80px; }
.chart-a { height: 358px; }
.chart-b { height: 376px; }
.chart-c { height: 340px; }
.chart-svg { display: block; width: 700px; height: 100%; font-family: "Noto Sans", "Noto Sans CJK SC", sans-serif; }
.c-title { font-size: 18px; fill: #008acd; text-anchor: middle; letter-spacing: .2px; }
.band { fill: #f9f9f9; }
.gridline { stroke: #eee; fill: none; }
.axis { stroke: #008acd; fill: none; stroke-width: 1.4; }
.ylab { font-size: 12px; fill: #008acd; text-anchor: end; }
.xlab { font-size: 12.4px; fill: #008acd; text-anchor: middle; }
.area-blue { fill: #a0aeda; }
.line-blue { fill: none; stroke: #b6a2de; stroke-width: 2; }
.area-purple { fill: #8084c2; }
.area-orange { fill: #cc9974; }
.area-overlap { fill: #c4926f; }
.area-orange-only { fill: #dba370; }
.line-purple { fill: none; stroke: #9b82cf; stroke-width: 2; }
.line-green { fill: none; stroke: #8fb05a; stroke-width: 2; }
.line-orange { fill: none; stroke: #f59240; stroke-width: 2; }
.area-tan { fill: #d0b39c; }
.line-tan { fill: none; stroke: #ffb980; stroke-width: 2; }
.area-mauve { fill: #a08fa3; }
.line-mauve { fill: none; stroke: #9295b0; stroke-width: 1.5; }
.dz { fill: #eeebf8; }
.dz-under { fill: #e8e4f4; }
.dz-line { fill: none; stroke: #d6d0e4; }

/* pies */
.lead { fill: none; stroke-width: 1; }
.lead-y { stroke: #ece58a; stroke-width: 1.5; }
.lead-o { stroke: #ffdcc0; stroke-width: 1.5; }
.lead-g { stroke: #c6cbd9; stroke-width: 1.5; }
.lead-r { stroke: #d87a80; }
.pie-lab { font-size: 13px; fill: #fff; text-anchor: middle; }
.lb { fill: #eee; stroke: #aaa; }
.lb-hr { fill: none; stroke: #bbb; }
.lb-h { font-size: 12px; fill: #999; text-anchor: middle; }
.lb-t { font-size: 16px; text-anchor: end; }
.lb-s { font-size: 16px; }
.lb-n { font-size: 12px; }
.tc-y { fill: #e5cf0d; }
.tc-g { fill: #8d98b3; }
.tc-r { fill: #d87a80; }
.tc-o { fill: #ffb980; }
.pc { fill: #334455; }
.pc-t { font-size: 12px; fill: #eee; text-anchor: middle; }
.lg-t { font-size: 12.1px; fill: #333; }
```
